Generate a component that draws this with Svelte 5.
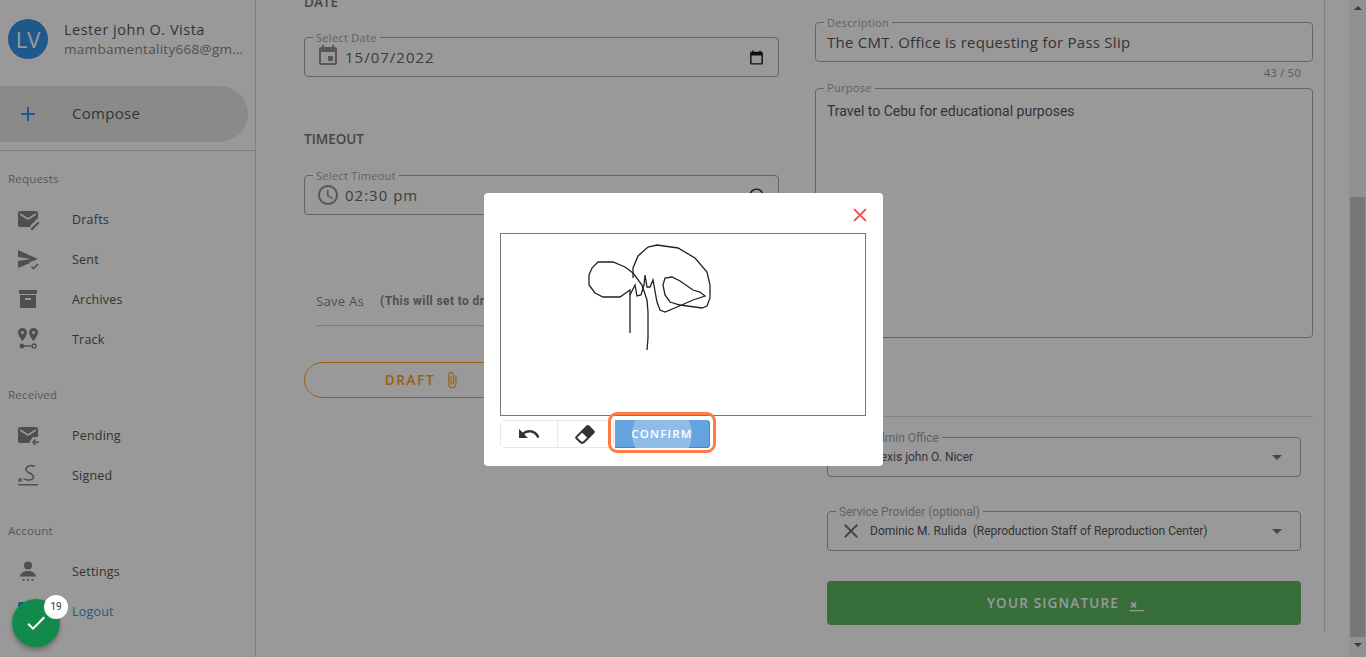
<script>
	const icons = {
		drafts: {
			d: 'M4 4h16c1.1 0 2 .9 2 2v5l-7.5 7.5V20H4c-1.1 0-2-.9-2-2V6c0-1.1.9-2 2-2zm0 2v2l8 5 8-5V6l-8 5zM15 21.5l7-7 1.5 1.5-7 7H15z'
		},
		sent: {
			d: 'M2 3l20 9-6.5 2.7L14 14.3 2 14v-0zM2 14l12 .3-.3 2L2 21zM2 3v7l13 2-13 2z',
			s: 'M15.5 19.5l2 2 4.5-4.5'
		},
		archive: {
			d: 'M3 3h18v4H3zM4 8h16v13H4zm5.5 3a.5.5 0 0 0-.5.5V13h6v-1.5a.5.5 0 0 0-.5-.5z'
		},
		track: {
			d: 'M6.5 1a4.5 4.5 0 0 0-4.5 4.5C2 9 6.5 14 6.5 14S11 9 11 5.5A4.5 4.5 0 0 0 6.5 1zm0 6a1.5 1.5 0 1 1 0-3 1.5 1.5 0 0 1 0 3zM17.5 1A4.5 4.5 0 0 0 13 5.5C13 9 17.5 14 17.5 14S22 9 22 5.5A4.5 4.5 0 0 0 17.5 1zm0 6a1.5 1.5 0 1 1 0-3 1.5 1.5 0 0 1 0 3zM6 16.5a2.5 2.5 0 0 1 2.4 1.7h6.4v1.6H8.4A2.5 2.5 0 1 1 6 16.5zM18 16.3a2.7 2.7 0 1 1 0 5.4 2.7 2.7 0 0 1 0-5.4zm0 1.4a1.3 1.3 0 1 0 0 2.6 1.3 1.3 0 0 0 0-2.6z'
		},
		pending: {
			d: 'M4 4h16c1.1 0 2 .9 2 2v8h-5l-3 4v2H4c-1.1 0-2-.9-2-2V6c0-1.1.9-2 2-2zm0 2v2l8 5 8-5V6l-8 5zM23 18.5v1.5h-4.5l1.5 1.5-1 1-3.2-3.2 3.2-3.3 1 1-1.5 1.5z'
		},
		signed: {
			d: 'M2 21h20v1.5H2z',
			s: 'M18.5 3.5C15 1.500 10 3 10 6.500c0 4 8 3.500 7.500 7.500-.4 3.500-7 4-10 1.500M2.500 15.500l3 3M5.500 15.500l-3 3'
		},
		settings: {
			d: 'M12 2.500a4 4 0 1 1 0 8 4 4 0 0 1 0-8zM4 17.500c0-3.500 4.500-5.500 8-5.500s8 2 8 5.500zM6.500 20h2v1.800h-2zM11 20h2v1.800h-2zM15.500 20h2v1.800h-2z'
		},
		logout: {
			d: 'M4 3h16c1.100 0 2 .9 2 2v14c0 1.100-.9 2-2 2H4c-1.100 0-2-.9-2-2V5c0-1.100.9-2 2-2z'
		}
	};

	const sections = [
		{ title: 'Requests', items: [['Drafts', 'drafts'], ['Sent', 'sent'], ['Archives', 'archive'], ['Track', 'track']] },
		{ title: 'Received', items: [['Pending', 'pending'], ['Signed', 'signed']] },
		{ title: 'Account', items: [['Settings', 'settings'], ['Logout', 'logout']] }
	];
</script>

<div class="app">
	<aside class="sidebar">
		<div class="profile">
			<div class="avatar">LV</div>
			<div class="who">
				<div class="name">Lester john O. Vista</div>
				<div class="email">mambamentality668@gmail.com</div>
			</div>
		</div>
		<div class="compose">
			<svg class="plus" viewBox="0 0 24 24"><path d="M19 13h-6v6h-2v-6H5v-2h6V5h2v6h6v2z" /></svg>
			<span>Compose</span>
		</div>
		<div class="rule"></div>
		{#each sections as section}
			<section class="group">
				<div class="group-title">{section.title}</div>
				{#each section.items as [label, icon]}
					<div class="nav-item" class:active={label === 'Logout'}>
						<svg class="nav-icon" viewBox="0 0 24 24">
							<path d={icons[icon].d} fill-rule="evenodd" />
							{#if icons[icon].s}
								<path class="line" d={icons[icon].s} />
							{/if}
						</svg>
						<span>{label}</span>
					</div>
				{/each}
			</section>
		{/each}
	</aside>

	<main class="main">
		<div class="form">
			<div class="col-left">
				<h4>DATE</h4>
				<div class="field date-field">
					<span class="field-label">Select Date</span>
					<svg class="lead cal" viewBox="0 0 24 24"><path d="M17 12h-5v5h5v-5zM16 1v2H8V1H6v2H5c-1.110 0-1.990.9-1.990 2L3 19c0 1.100.89 2 2 2h14c1.100 0 2-.9 2-2V5c0-1.100-.9-2-2-2h-1V1h-2zm3 18H5V8h14v11z" /></svg>
					<span class="value">15/07/2022</span>
					<svg class="native" viewBox="0 0 24 24"><path d="M19 4h-1V2h-2v2H8V2H6v2H5c-1.100 0-2 .9-2 2v14c0 1.100.9 2 2 2h14c1.100 0 2-.9 2-2V6c0-1.100-.9-2-2-2zm0 16H5V9h14v11z" /></svg>
				</div>
				<h4 class="timeout">TIMEOUT</h4>
				<div class="field date-field">
					<span class="field-label">Select Timeout</span>
					<svg class="lead" viewBox="0 0 24 24"><path d="M11.990 2C6.470 2 2 6.480 2 12s4.470 10 9.990 10C17.520 22 22 17.520 22 12S17.520 2 11.990 2zM12 20c-4.420 0-8-3.580-8-8s3.580-8 8-8 8 3.580 8 8-3.580 8-8 8zm.5-13H11v6l5.250 3.150.75-1.230-4.500-2.670z" /></svg>
					<span class="value">02:30 pm</span>
					<svg class="native" viewBox="0 0 24 24"><path d="M11.990 2C6.470 2 2 6.480 2 12s4.470 10 9.990 10C17.520 22 22 17.520 22 12S17.520 2 11.990 2zM12 20c-4.420 0-8-3.580-8-8s3.580-8 8-8 8 3.580 8 8-3.580 8-8 8z" /></svg>
				</div>
				<div class="save-as">
					<span class="save-label">Save As</span>
					<span class="save-note">(This will set to draft)</span>
				</div>
				<button class="draft">
					DRAFT
					<svg viewBox="0 0 24 24"><path d="M16.500 6v11.500c0 2.210-1.790 4-4 4s-4-1.790-4-4V5c0-1.380 1.120-2.500 2.500-2.500s2.500 1.120 2.500 2.500v10.500c0 .55-.45 1-1 1s-1-.45-1-1V6H10v9.500c0 1.380 1.120 2.500 2.500 2.500s2.500-1.120 2.500-2.500V5c0-2.210-1.790-4-4-4S7 2.790 7 5v12.500c0 3.040 2.460 5.500 5.500 5.500s5.500-2.460 5.500-5.500V6h-1.500z" /></svg>
				</button>
			</div>

			<div class="col-right">
				<div class="field desc-field">
					<span class="field-label">Description</span>
					<span class="desc">The CMT. Office is requesting for Pass Slip</span>
				</div>
				<div class="counter">43 / 50</div>
				<div class="field purpose">
					<span class="field-label">Purpose</span>
					<p>Travel to Cebu for educational purposes</p>
				</div>
				<div class="signers">
					<div class="field select">
						<span class="field-label">Head Admin Office</span>
						<svg class="clear" viewBox="0 0 24 24"><path d="M19 6.410L17.590 5 12 10.590 6.410 5 5 6.410 10.590 12 5 17.590 6.410 19 12 13.410 17.590 19 19 17.590 13.410 12z" /></svg>
						<span class="select-value">Alexis john O. Nicer</span>
						<svg class="arrow" viewBox="0 0 24 24"><path d="M7 10l5 5 5-5z" /></svg>
					</div>
					<div class="field select">
						<span class="field-label">Service Provider (optional)</span>
						<svg class="clear" viewBox="0 0 24 24"><path d="M19 6.410L17.590 5 12 10.590 6.410 5 5 6.410 10.590 12 5 17.590 6.410 19 12 13.410 17.590 19 19 17.590 13.410 12z" /></svg>
						<span class="select-value">Dominic M. Rulida&nbsp; (Reproduction Staff of Reproduction Center)</span>
						<svg class="arrow" viewBox="0 0 24 24"><path d="M7 10l5 5 5-5z" /></svg>
					</div>
					<button class="signature">
						YOUR SIGNATURE
						<svg viewBox="0 0 24 24"><path d="M1 21h22v2H1zM2.500 11l2-2 2.500 2.500L9.500 9l2 2L9 13.500l2.500 2.500-2 2L7 15.500 4.500 18l-2-2L5 13.500z" /></svg>
					</button>
				</div>
			</div>
		</div>
	</main>

	<div class="scrollbar">
		<span class="up"></span>
		<span class="thumb"></span>
		<span class="down"></span>
	</div>

	<div class="overlay">
		<div class="dialog">
			<div class="dialog-head">
				<svg class="close" viewBox="0 0 14 14"><path d="M1 1l12 12M13 1L1 13" /></svg>
			</div>
			<div class="canvas">
				<svg viewBox="501 234 364 181">
					<path d="M630 333V290L620 297 603 297 595 293 589 285 589 275 592 268 598 262 613 262 625 267 633 273 642 285 647 300 648 312 648 338 647 350" />
					<path d="M633 278V268L638 256 648 247 657 245 678 248 695 258 707 272 710 285V298L707 306 702 308 680 305 670 302 665 295 663 285 665 278 672 277 680 281 693 290 700 292 705 296 693 300 677 307 665 312 660 310 657 302 653 280 650 287 647 287 645 275 644 285 641 295 637 296 635 285 630 295" />
				</svg>
			</div>
			<div class="tools">
				<div class="tool-group">
					<button class="tool" aria-label="Undo">
						<svg viewBox="0 0 24 24"><path d="M12.500 8c-2.650 0-5.050.99-6.900 2.600L2 7v9h9l-3.620-3.620c1.390-1.160 3.160-1.880 5.120-1.880 3.540 0 6.550 2.310 7.600 5.500l2.370-.78C21.080 11.030 17.150 8 12.500 8z" /></svg>
					</button>
					<button class="tool" aria-label="Erase">
						<svg viewBox="0 0 24 24"><path d="M16.240 3.560l4.950 4.940c.78.79.78 2.050 0 2.840L12 20.530a4.008 4.008 0 0 1-5.660 0L2.810 17c-.78-.79-.78-2.050 0-2.840l10.600-10.600c.79-.78 2.050-.78 2.830 0M4.220 15.580l3.540 3.530c.78.79 2.040.79 2.830 0l3.530-3.530-4.950-4.950-4.950 4.950z" /></svg>
					</button>
				</div>
				<div class="confirm-wrap">
					<button class="confirm"><span class="ripple"></span><span class="confirm-text">CONFIRM</span></button>
				</div>
			</div>
		</div>
	</div>

	<div class="fab">
		<svg viewBox="0 0 24 24"><path d="M9 16.170L4.830 12l-1.420 1.410L9 19 21 7l-1.410-1.410z" /></svg>
		<span class="badge">19</span>
	</div>
</div>

<style>
	:global(body) {
		margin: 0;
		background: #fff;
	}

	.app {
		position: relative;
		display: flex;
		height: 657px;
		overflow: hidden;
		font-family: "Open Sans", sans-serif;
		color: #444;
	}

	.sidebar {
		flex: 0 0 256px;
		box-sizing: border-box;
		min-width: 0;
		border-right: 1px solid #d0d0d0;
	}

	.profile {
		display: flex;
		align-items: center;
		gap: 16px;
		height: 78px;
		padding: 0 4px 0 8px;
		box-sizing: border-box;
		width: 248px;
	}

	.avatar {
		flex: none;
		width: 40px;
		height: 40px;
		border-radius: 50%;
		background: #1e88e5;
		color: #fff;
		font-size: 22px;
		line-height: 40px;
		text-align: center;
	}

	.who {
		min-width: 0;
		flex: 1;
	}

	.name {
		font-size: 14.5px;
		line-height: 20px;
		letter-spacing: 0.5px;
		color: #444;
	}

	.email {
		font-size: 13.5px;
		line-height: 18px;
		letter-spacing: 0.3px;
		color: #777;
		white-space: nowrap;
		overflow: hidden;
		text-overflow: ellipsis;
	}

	.compose {
		display: flex;
		align-items: center;
		width: 248px;
		height: 56px;
		margin-top: 8px;
		margin-bottom: 8px;
		padding-bottom: 2px;
		box-sizing: border-box;
		border-radius: 0 28px 28px 0;
		background: #e4e4e4;
		font-size: 15px;
		letter-spacing: 0.3px;
	}

	.plus {
		width: 24px;
		height: 24px;
		margin: 2px 32px 0 16px;
		fill: #1e88e5;
	}

	.rule {
		height: 1px;
		background: #d0d0d0;
	}

	.group {
		margin-top: 16px;
	}

	.group:first-of-type {
		margin-top: 8px;
	}

	.group-title {
		height: 40px;
		padding-left: 8px;
		font-size: 11.5px;
		line-height: 40px;
		letter-spacing: 0.2px;
		color: #888;
	}

	.nav-item {
		display: flex;
		align-items: center;
		height: 40px;
		padding-left: 16px;
		font-size: 12.5px;
		letter-spacing: 0.2px;
	}

	.nav-icon {
		flex: none;
		width: 24px;
		height: 24px;
		margin-right: 32px;
		fill: #777;
	}

	.line {
		fill: none;
		stroke: #777;
		stroke-width: 1.600;
	}

	.nav-item.active {
		color: #1e88e5;
	}

	.nav-item.active .nav-icon {
		fill: #1e88e5;
	}

	.main {
		flex: 1;
		min-width: 0;
	}

	.form {
		display: grid;
		grid-template-columns: 475px 498px;
		column-gap: 36px;
		width: max-content;
		height: 640px;
		margin-top: -8px;
		padding: 0 11px 0 48px;
		border-right: 1px solid #d0d0d0;
	}

	h4 {
		margin: 0 0 25px;
		font-size: 13.5px;
		font-weight: 600;
		line-height: 20px;
		color: #666;
	}

	.timeout {
		margin: 52px 0 26px;
	}

	.field {
		position: relative;
		box-sizing: border-box;
		border: 1px solid #9e9e9e;
		border-radius: 4px;
		background: #fff;
	}

	.field-label {
		position: absolute;
		top: -6px;
		left: 8px;
		padding: 0 3px;
		background: #fff;
		font-size: 11px;
		line-height: 12px;
		letter-spacing: 0.3px;
		color: #999;
		white-space: nowrap;
	}

	.date-field {
		display: flex;
		align-items: center;
		height: 40px;
		padding: 0 12px 0 11px;
	}

	.lead {
		flex: none;
		width: 24px;
		height: 24px;
		margin-right: 5px;
		fill: #888;
	}

	.cal {
		margin-top: -2px;
	}

	.value {
		flex: 1;
		font-size: 15px;
		letter-spacing: 1px;
		color: #555;
	}

	.native {
		width: 17px;
		height: 17px;
		fill: #000;
		margin-right: 1px;
	}

	.save-as {
		display: flex;
		align-items: center;
		gap: 16px;
		height: 48px;
		margin: 62px 0 36px 12px;
		border-bottom: 1px solid #c8c8c8;
	}

	.save-label {
		font-size: 13px;
		letter-spacing: 0.3px;
		color: #777;
	}

	.save-note {
		font-family: Roboto, sans-serif;
		font-size: 12px;
		font-weight: 700;
		letter-spacing: 0.4px;
		color: #777;
	}

	button {
		border: none;
		padding: 0;
		font-family: inherit;
	}

	.draft {
		display: flex;
		align-items: center;
		justify-content: center;
		gap: 8px;
		width: 238px;
		height: 36px;
		border: 1px solid #ff9800;
		border-radius: 18px;
		background: transparent;
		color: #ff9800;
		font-size: 13.500px;
		font-weight: 600;
		letter-spacing: 1.600px;
	}

	.draft svg {
		width: 18px;
		height: 18px;
		fill: #ff9800;
	}

	.col-right {
		padding-top: 30px;
	}

	.desc-field {
		display: flex;
		align-items: center;
		height: 40px;
		padding: 0 11px;
	}

	.desc {
		font-size: 15px;
		letter-spacing: 0.26px;
		color: #444;
	}

	.counter {
		height: 26px;
		padding-right: 12px;
		font-size: 11px;
		line-height: 21px;
		letter-spacing: 0.3px;
		text-align: right;
		color: #888;
	}

	.purpose {
		height: 250px;
		padding: 12px 11px;
		margin-bottom: 78px;
	}

	.purpose .field-label {
		top: -7px;
	}

	.purpose p {
		margin: 0;
		font-family: Roboto, sans-serif;
		font-size: 14px;
		line-height: 20px;
		color: #444;
	}

	.signers {
		display: flex;
		flex-direction: column;
		gap: 34px;
		padding: 20px 12px 0;
		border-top: 1px solid #d8d8d8;
	}

	.select {
		display: flex;
		align-items: center;
		height: 40px;
		padding: 0 12px;
		font-family: Roboto, sans-serif;
	}

	.select .field-label {
		font-size: 12px;
		letter-spacing: 0;
		line-height: 14px;
		top: -7px;
	}

	.clear {
		flex: none;
		width: 24px;
		height: 24px;
		margin-right: 7px;
		margin-left: -1px;
		fill: #666;
	}

	.select-value {
		flex: 1;
		font-size: 12px;
		color: #444;
	}

	.arrow {
		width: 24px;
		height: 24px;
		margin-right: -1px;
		fill: #666;
	}

	.signature {
		display: flex;
		align-items: center;
		justify-content: center;
		gap: 10px;
		height: 44px;
		margin-top: -4px;
		padding-left: 4px;
		border-radius: 4px;
		background: #4caf50;
		color: #fff;
		font-size: 13.500px;
		font-weight: 600;
		letter-spacing: 1.200px;
	}

	.signature svg {
		width: 16px;
		height: 16px;
		fill: #fff;
		margin-top: 2px;
	}

	.scrollbar {
		flex: none;
		display: flex;
		flex-direction: column;
		align-items: center;
		width: 17px;
		background: #f1f1f1;
	}

	.up,
	.down {
		flex: none;
		width: 0;
		height: 0;
		border-left: 4px solid transparent;
		border-right: 4px solid transparent;
	}

	.up {
		margin-top: 6px;
		border-bottom: 4px solid #505050;
	}

	.down {
		margin-top: 6px;
		border-top: 4px solid #505050;
	}

	.thumb {
		width: 15px;
		height: 440px;
		margin-top: 187px;
		background: #c1c1c1;
	}

	.overlay {
		position: absolute;
		inset: 0;
		display: flex;
		align-items: center;
		justify-content: center;
		background: rgba(33, 33, 33, 0.46);
	}

	.dialog {
		box-sizing: border-box;
		width: 399px;
		height: 273px;
		padding: 0 16px;
		border-radius: 4px;
		background: #fff;
		margin-top: 1px;
	}

	.dialog-head {
		display: flex;
		justify-content: flex-end;
		height: 40px;
		padding: 15px 0 0;
		box-sizing: border-box;
	}

	.close {
		width: 14px;
		height: 14px;
		fill: none;
		stroke: #ff5252;
		stroke-width: 1.800;
	}

	.canvas {
		box-sizing: border-box;
		width: 366px;
		height: 183px;
		border: 1px solid #777;
	}

	.canvas svg {
		display: block;
		width: 100%;
		height: 100%;
		fill: none;
		stroke: #222;
		stroke-width: 1.300;
	}

	.tools {
		display: flex;
		gap: 1px;
		margin-top: 4px;
	}

	.tool-group {
		display: flex;
		box-sizing: border-box;
		border: 1px solid #e8e8e8;
		border-radius: 4px;
	}

	.tool {
		display: flex;
		align-items: center;
		justify-content: center;
		width: 56px;
		height: 26px;
		background: #fff;
	}

	.tool + .tool {
		border-left: 1px solid #e8e8e8;
	}

	.tool svg {
		width: 24px;
		height: 24px;
		fill: #333;
	}

	.confirm-wrap {
		position: relative;
	}

	.confirm-wrap::after {
		content: "";
		position: absolute;
		top: -8px;
		right: -6px;
		bottom: -5px;
		left: -7px;
		border: 3px solid #ff7a45;
		border-radius: 9px;
		pointer-events: none;
	}

	.confirm {
		position: relative;
		display: block;
		width: 95px;
		height: 28px;
		padding-bottom: 1px;
		overflow: hidden;
		border-radius: 0 4px 4px 0;
		background: #64a2e0;
		box-shadow: inset 0 -1px 0 #4a86c4, inset -1px 0 0 #4a86c4;
		color: #fff;
		font-size: 11.500px;
		font-weight: 600;
		letter-spacing: 1.200px;
	}

	.ripple {
		position: absolute;
		top: -16px;
		left: 17px;
		width: 60px;
		height: 60px;
		border-radius: 50%;
		background: #90bde8;
	}

	.confirm-text {
		position: relative;
	}

	.fab {
		position: absolute;
		left: 12px;
		top: 599px;
		display: flex;
		align-items: center;
		justify-content: center;
		width: 48px;
		height: 48px;
		border-radius: 50%;
		background: #128a4c;
		box-shadow: 0 3px 5px rgba(0, 0, 0, 0.3);
	}

	.fab svg {
		width: 24px;
		height: 24px;
		fill: #fff;
	}

	.badge {
		position: absolute;
		top: -4px;
		right: -8px;
		width: 24px;
		height: 24px;
		border-radius: 50%;
		background: #fff;
		font-family: Roboto, sans-serif;
		font-size: 10px;
		line-height: 24px;
		text-align: center;
		color: #333;
	}
</style>
